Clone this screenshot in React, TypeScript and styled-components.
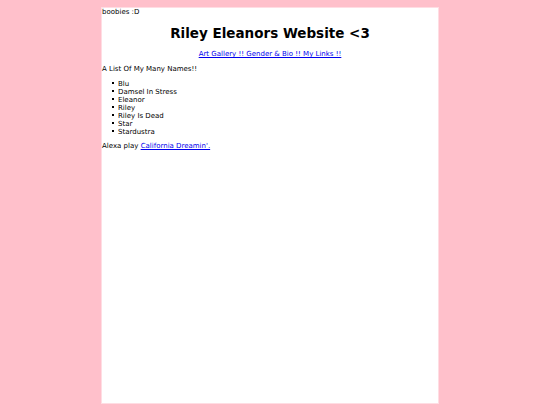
import React from 'react';
import styled, { createGlobalStyle } from 'styled-components';

const GlobalStyle = createGlobalStyle`
    html, body {
        margin: 0;
        padding: 0;
        background: #ffc0cb;
    }
    body {
        font-family: "DejaVu Sans", Verdana, sans-serif;
        font-size: 7px;
        color: #000;
    }
`;

const Page = styled.div`
    width: 336px;
    min-height: 395px;
    margin: 7px auto 0;
    background: #fff;
    border: 1px solid #ffdde3;
`;

const Note = styled.div`
    line-height: 9px;
`;

const Title = styled.h1`
    margin: 8px 0 9px;
    font-size: 13.5px;
    text-align: center;
`;

const Nav = styled.div`
    text-align: center;
    margin-bottom: 7px;
`;

const Link = styled.a`
    color: #0000ee;
    text-decoration: underline;
`;

const Heading = styled.p`
    margin: 0 0 7px;
`;

const Names = styled.ul`
    margin: 0 0 6px;
    padding-left: 16px;
    list-style: none;
`;

const Name = styled.li`
    line-height: 8px;
    &::before {
        content: '';
        display: inline-block;
        width: 2px;
        height: 2px;
        margin-left: -6px;
        margin-right: 4px;
        vertical-align: 2px;
        background: #000;
    }
`;

const Footer = styled.p`
    margin: 0;
`;

const names = ['Blu', 'Damsel In Stress', 'Eleanor', 'Riley', 'Riley Is Dead', 'Star', 'Stardustra'];

export default function App() {
    return (
        <>
            <GlobalStyle />
            <Page>
                <Note>boobies :D</Note>
                <Title>Riley Eleanors Website &lt;3</Title>
                <Nav>
                    <Link href="#">Art Gallery !! Gender &amp; Bio !! My Links !!</Link>
                </Nav>
                <Heading>A List Of My Many Names!!</Heading>
                <Names>
                    {names.map((n) => (
                        <Name key={n}>{n}</Name>
                    ))}
                </Names>
                <Footer>
                    Alexa play <Link href="#">California Dreamin'.</Link>
                </Footer>
            </Page>
        </>
    );
}
